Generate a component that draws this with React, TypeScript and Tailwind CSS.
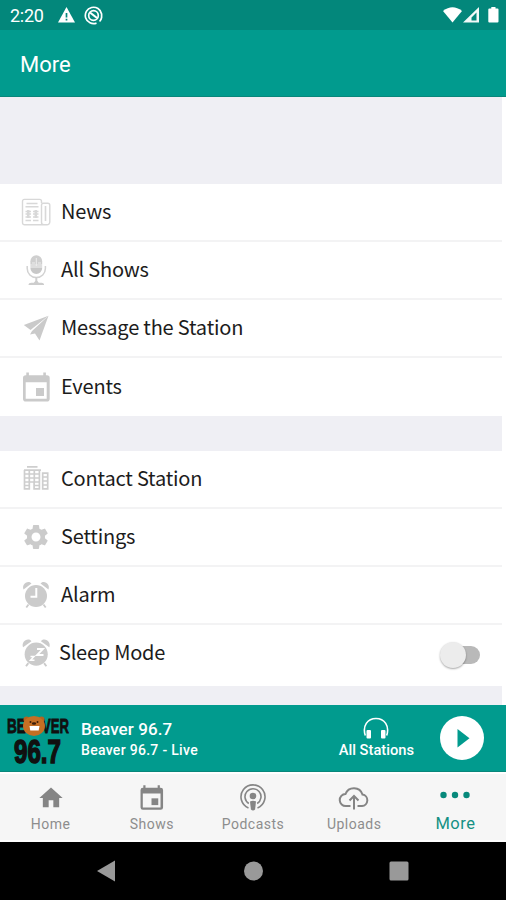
import React from 'react';
import { MdHome, MdSettings } from 'react-icons/md';

const NewsIcon = () => (
  <svg width="32" height="32" viewBox="0 0 32 32" fill="none" stroke="#d8d8d8" strokeWidth="1.4">
    <path d="M21.5 7V5.200a1.800 1.800 0 0 0-1.800-1.800H4.300a1.800 1.800 0 0 0-1.800 1.800v21.600a2 2 0 0 0 2 2H27a2.800 2.800 0 0 0 2.800-2.800V9.200a2 2 0 0 0-2-2h-4.500a1.800 1.800 0 0 0-1.800 1.800v17.200a2.600 2.600 0 0 0 2.600 2.600" />
    <path d="M25.500 10v15" strokeWidth="1.600" />
    <path d="M6.500 7.500h11M5.500 10.800h13" />
    <path d="M5.500 15.500h5.500M5.500 18h5.500M5.500 21h5.500M5.500 24.500h5.500M13 15.500h5.500M13 18h5.500M13 21h5.500M13 24.500h5.500" strokeWidth="1.400" />
    <path d="M8.200 14v8M15.800 14v8" strokeWidth="2.500" />
  </svg>
);

const MicIcon = () => (
  <svg width="32" height="32" viewBox="0 0 32 32" fill="none">
    <path d="M10.400 7.200a5.900 5.900 0 0 1 11.800 0V10H10.400z" fill="#cfcfcf" />
    <path d="M10.400 10h11.800v4H10.400z" fill="#dedede" />
    <path d="M10.400 14h11.800a5.900 5.900 0 0 1-11.800 0z" fill="#c8c8c8" />
    <path d="M16.300 4v8M12 9h3M18 9h3" stroke="#eee" />
    <path d="M7.200 12v2.500a9.100 9.100 0 0 0 18.200 0V12" stroke="#d2d2d2" strokeWidth="1.500" />
    <path d="M16.300 23v5" stroke="#cfcfcf" strokeWidth="2" />
    <path d="M8.500 31c0-1.600 1.200-2.300 2.700-2.300h2.600l1.500-1.700h2l1.500 1.700h2.600c1.500 0 2.700.7 2.700 2.300z" fill="#cdcdcd" />
  </svg>
);

const PlaneIcon = () => (
  <svg width="32" height="32" viewBox="0 0 32 32" fill="#cacaca">
    <path d="M28.500 3.800 3.800 13 10.500 18z" />
    <path d="M28.500 3.800 12 19 10 22.500 15 21.500 19.500 28.500z" />
  </svg>
);

const CalendarIcon = ({ size, color }: { size: number; color: string }) => (
  <svg width={size} height={size} viewBox="0 0 32 32" fill={color}>
    <path
      fillRule="evenodd"
      d="M6.300 1.500h2.600v2.800h14.400V1.500h2.600v2.800h1a2.800 2.800 0 0 1 2.800 2.800v20.700a2.800 2.800 0 0 1-2.800 2.800H5.800A2.800 2.800 0 0 1 3 27.800V7.100a2.800 2.800 0 0 1 2.800-2.800h.5zM5.700 11.300v16.500h21V11.300z"
    />
    <rect x="16" y="17" width="8" height="8" />
  </svg>
);

const BuildingIcon = () => (
  <svg width="32" height="32" viewBox="0 0 32 32" fill="none" stroke="#cecece" strokeWidth="1.700">
    <path d="M7 3.900h10.500M4 7.200h17" strokeWidth="1.800" />
    <path d="M4.500 7v18.800h4.800V19h4.800v6.800h5.300V7M9.300 8v11M14.300 8v11M4.500 11h15M4.500 15h15M4.500 19h15M4.500 22.500h4.800M14.200 22.500h5.200" />
    <path d="M22.700 10.200h5v15.600h-5zM22.700 14h5M22.700 18h5M22.700 22h5" />
  </svg>
);

const ClockBody = () => (
  <>
    <circle cx="16" cy="17" r="11" fill="#cbcbcb" />
    <path d="M3.500 10.500C2 7 4.700 3 8.500 3.100c1.300 0 2.300.6 3 1.500zM28.500 10.500c1.500-3.500-1.200-7.500-5-7.400-1.300 0-2.300.6-3 1.500z" fill="#cbcbcb" />
    <path d="m8.500 25.500-2.200 3M23.500 25.500l2.200 3" stroke="#cbcbcb" strokeWidth="1.800" />
  </>
);

const AlarmIcon = () => (
  <svg width="32" height="32" viewBox="0 0 32 32" fill="none">
    <ClockBody />
    <path d="M16.300 9v8.700h-5.800" stroke="#fff" strokeWidth="2" />
  </svg>
);

const SleepIcon = () => (
  <svg width="32" height="32" viewBox="0 0 32 32" fill="none">
    <g transform="translate(-.6 -.7) scale(1.050)">
      <ClockBody />
    </g>
    <path d="M17 12h6l-6 6h6.500" stroke="#fff" strokeWidth="1.800" />
    <path d="M10.500 19.500H14l-3.500 3.700h4" stroke="#fff" strokeWidth="1.500" />
  </svg>
);

const StatusIcons = () => (
  <svg width="56" height="20" viewBox="0 0 56 20" fill="#fff">
    <path d="M0 6Q9.500-1.500 19 6L9.500 17.500z" />
    <path fillRule="evenodd" d="M36 2v15.500H20zM33.500 7.500 28.500 12.500v3h5z" opacity=".95" />
    <path d="M46.300 3.500h2V2h4.200v1.500h2a1 1 0 0 1 1 1v12a1 1 0 0 1-1 1h-8.200a1 1 0 0 1-1-1v-12a1 1 0 0 1 1-1z" />
  </svg>
);

const PodcastIcon = () => (
  <svg width="28" height="30" viewBox="0 0 28 30" fill="none" stroke="#858585" strokeWidth="1.600">
    <path d="M9.500 25A12 12 0 1 1 18.500 25" />
    <path d="M9.800 20.500A8 8 0 1 1 18.200 20.500" />
    <circle cx="14" cy="13" r="3.300" fill="#858585" stroke="none" />
    <path d="M11 18.500q3-1.700 6 0l-.9 8q-2.100 2-4.200 0z" fill="#858585" stroke="none" />
  </svg>
);

const UploadIcon = () => (
  <svg width="32" height="26" viewBox="0 0 32 26" fill="none" stroke="#858585" strokeWidth="2">
    <path d="M12.500 21H8a6 6 0 0 1-.5-12A9 9 0 0 1 24.500 9.500 5.800 5.800 0 0 1 24 21h-4.500" />
    <path d="M16 24.500V12M11.500 15.500 16 11l4.500 4.500" />
  </svg>
);

const DotsIcon = () => (
  <svg width="30" height="8" viewBox="0 0 30 8" fill="#07897b">
    <circle cx="3.500" cy="4" r="3.200" />
    <circle cx="15" cy="4" r="3.200" />
    <circle cx="26.500" cy="4" r="3.200" />
  </svg>
);

const HeadphonesIcon = () => (
  <svg width="26" height="23" viewBox="0 0 26 23" fill="none">
    <path d="M2.300 18.500C-.8 9 4.500 1.500 13 1.500S26.800 9 23.700 18.500" stroke="#fff" strokeWidth="1.600" />
    <rect x="3.500" y="13" width="4.500" height="8.500" rx="1" fill="#fff" />
    <rect x="18" y="13" width="4.500" height="8.500" rx="1" fill="#fff" />
  </svg>
);

// Station artwork: lettering with the mascot in front
const StationLogo = () => (
  <svg className="overflow-visible" width="68" height="60" viewBox="0 -2 68 60" fontFamily="Liberation Sans, Arial, sans-serif" fontWeight="bold">
    <g fill="#101010" stroke="#101010" strokeWidth=".8">
      <text x="1" y="22.500" fontSize="20" textLength="19" lengthAdjust="spacingAndGlyphs">BE</text>
      <text x="36" y="22.500" fontSize="20" textLength="27" lengthAdjust="spacingAndGlyphs">VER</text>
      <text x="8" y="53" fontSize="33" strokeWidth="1.500" textLength="47" lengthAdjust="spacingAndGlyphs">96.7</text>
    </g>
    <circle cx="20.500" cy="9.500" r="3" fill="#b4631f" />
    <circle cx="35.500" cy="9.500" r="3" fill="#b4631f" />
    <ellipse cx="28" cy="16" rx="11" ry="10" fill="#c46f24" />
    <circle cx="24.500" cy="12" r="1" fill="#3b1c08" />
    <circle cx="31.500" cy="12" r="1" fill="#3b1c08" />
    <ellipse cx="28" cy="13.500" rx="2.200" ry="1.300" fill="#3b1c08" />
    <path d="M23.500 16h10l-.8 4.500h-8.400z" fill="#fff" />
  </svg>
);

const stationItems = [
  { label: 'News', icon: <NewsIcon /> },
  { label: 'All Shows', icon: <MicIcon /> },
  { label: 'Message the Station', icon: <PlaneIcon /> },
  { label: 'Events', icon: <CalendarIcon size={32} color="#cacaca" /> },
];

const appItems = [
  { label: 'Contact Station', icon: <BuildingIcon /> },
  { label: 'Settings', icon: <MdSettings size={30} color="#cbcbcb" /> },
  { label: 'Alarm', icon: <AlarmIcon /> },
];

const tabs = [
  { label: 'Home', icon: <MdHome size={28} color="#858585" /> },
  { label: 'Shows', icon: <CalendarIcon size={27} color="#858585" /> },
  { label: 'Podcasts', icon: <PodcastIcon /> },
  { label: 'Uploads', icon: <UploadIcon /> },
];

const MenuRow = ({ label, icon }: { label: string; icon: React.ReactNode }) => (
  <div className="flex h-[58px] items-center bg-white pl-5">
    <div className="flex w-8 justify-center">{icon}</div>
    <span className="pb-[2px] pl-[9px] text-[20px] leading-6 tracking-[-0.19px]">{label}</span>
  </div>
);

const App: React.FC = () => {
  return (
    <div className="flex h-[900px] w-[506px] flex-col overflow-hidden bg-white font-[Roboto,sans-serif]">
      {/* Status bar */}
      <div className="flex h-[30px] shrink-0 items-center bg-[#03877b] pr-[7px] pl-[10px] text-white">
        <span className="w-[48px] pt-[2px] text-[18px] leading-5 tracking-[-0.3px]">2:20</span>
        <svg width="17" height="16" viewBox="0 0 17 16">
          <path d="M8.500 0 17 15.500H0z" fill="#fff" />
          <path d="M8.500 6v4.500M8.500 11.800v1.800" stroke="#03877b" strokeWidth="1.700" />
        </svg>
        <svg className="ml-[9px]" width="19" height="19" viewBox="0 0 19 19" fill="none" stroke="#fff">
          <path d="M12.500 17.100A8.200 8.200 0 1 1 17.600 8v3.500q-.5 2.500-2 4" strokeWidth="1.700" />
          <circle cx="9.500" cy="9.500" r="4.800" strokeWidth="1.700" />
          <path d="m6 6.500 7 5.500" strokeWidth="2.200" />
        </svg>
        <div className="ml-auto">
          <StatusIcons />
        </div>
      </div>

      {/* Title bar */}
      <header className="flex h-[67px] shrink-0 items-center border-b border-[#09877b] bg-[#019b8e] pt-1 pl-[20px]">
        <h1 className="text-[22px] leading-7 text-white">More</h1>
      </header>

      {/* Menu */}
      <main className="w-[502px] shrink-0 bg-[#efeff4] pt-[87px] pb-[19px] font-['Noto_Sans_CJK_SC',sans-serif] text-[#1c1c1c]">
        <div className="divide-y-2 divide-[#f3f3f4]">
          {stationItems.map((item) => (
            <MenuRow key={item.label} {...item} />
          ))}
        </div>
        <div className="h-[35px]" />
        <div className="divide-y-2 divide-[#f3f3f4]">
          {appItems.map((item) => (
            <MenuRow key={item.label} {...item} />
          ))}
          <div className="flex h-[61px] items-center bg-white pr-[22px] pb-[5px] pl-5">
            <SleepIcon />
            <span className="pb-[2px] pl-[7px] text-[20px] leading-6 tracking-[-0.25px]">Sleep Mode</span>
            <div className="mt-[4px] ml-auto flex h-[18px] w-[36px] items-center rounded-full bg-[#b9b9b9]">
              <div className="-ml-[4px] size-[26px] shrink-0 rounded-full bg-[#ececec] shadow-[0_1px_2px_rgba(0,0,0,0.35)]" />
            </div>
          </div>
        </div>
      </main>

      {/* Player */}
      <section className="flex h-[67px] shrink-0 items-center border-b border-[#09877b] bg-[#019b8e] pr-[22px] pl-[6px] text-white">
        <StationLogo />
        <div className="mt-[3px] ml-[7px]">
          <p className="text-[17px] leading-[22px] font-medium tracking-[0.1px]">Beaver 96.7</p>
          <p className="text-[14px] leading-[21px] font-medium tracking-[0.3px]">Beaver 96.7 - Live</p>
        </div>
        <div className="mr-[26px] ml-auto flex flex-col items-center">
          <HeadphonesIcon />
          <span className="text-[14.700px] leading-5 font-medium">All Stations</span>
        </div>
        <svg width="44" height="44" viewBox="0 0 44 44">
          <circle cx="22" cy="22" r="22" fill="#fff" />
          <path d="M17.500 13v18.500L29.500 22.200z" fill="#019b8e" />
        </svg>
      </section>

      {/* Tabs */}
      <nav className="grid h-[70px] shrink-0 grid-cols-5 border-y-2 border-white bg-[#f6f6f6]">
        {tabs.map((tab) => (
          <div key={tab.label} className="flex flex-col items-center text-[#8d8d8d]">
            <div className="flex h-[42px] items-center justify-center pt-[5px]">{tab.icon}</div>
            <span className="text-[14px] leading-[17px] tracking-[0.5px]">{tab.label}</span>
          </div>
        ))}
        <div className="flex flex-col items-center text-[#159184]">
          <div className="flex h-[41px] items-center justify-center">
            <DotsIcon />
          </div>
          <span className="text-[16.500px] leading-[18px] tracking-[0.5px]">More</span>
        </div>
      </nav>

      {/* System navigation */}
      <div className="flex grow items-center justify-center bg-black">
        <svg width="312" height="22" viewBox="0 0 312 22" fill="#999">
          <path d="M0 11 18 .5v21z" />
          <circle cx="156.500" cy="11" r="9.500" />
          <rect x="292.500" y="1.500" width="19" height="19" rx="1.500" />
        </svg>
      </div>
    </div>
  );
};

export default App;
